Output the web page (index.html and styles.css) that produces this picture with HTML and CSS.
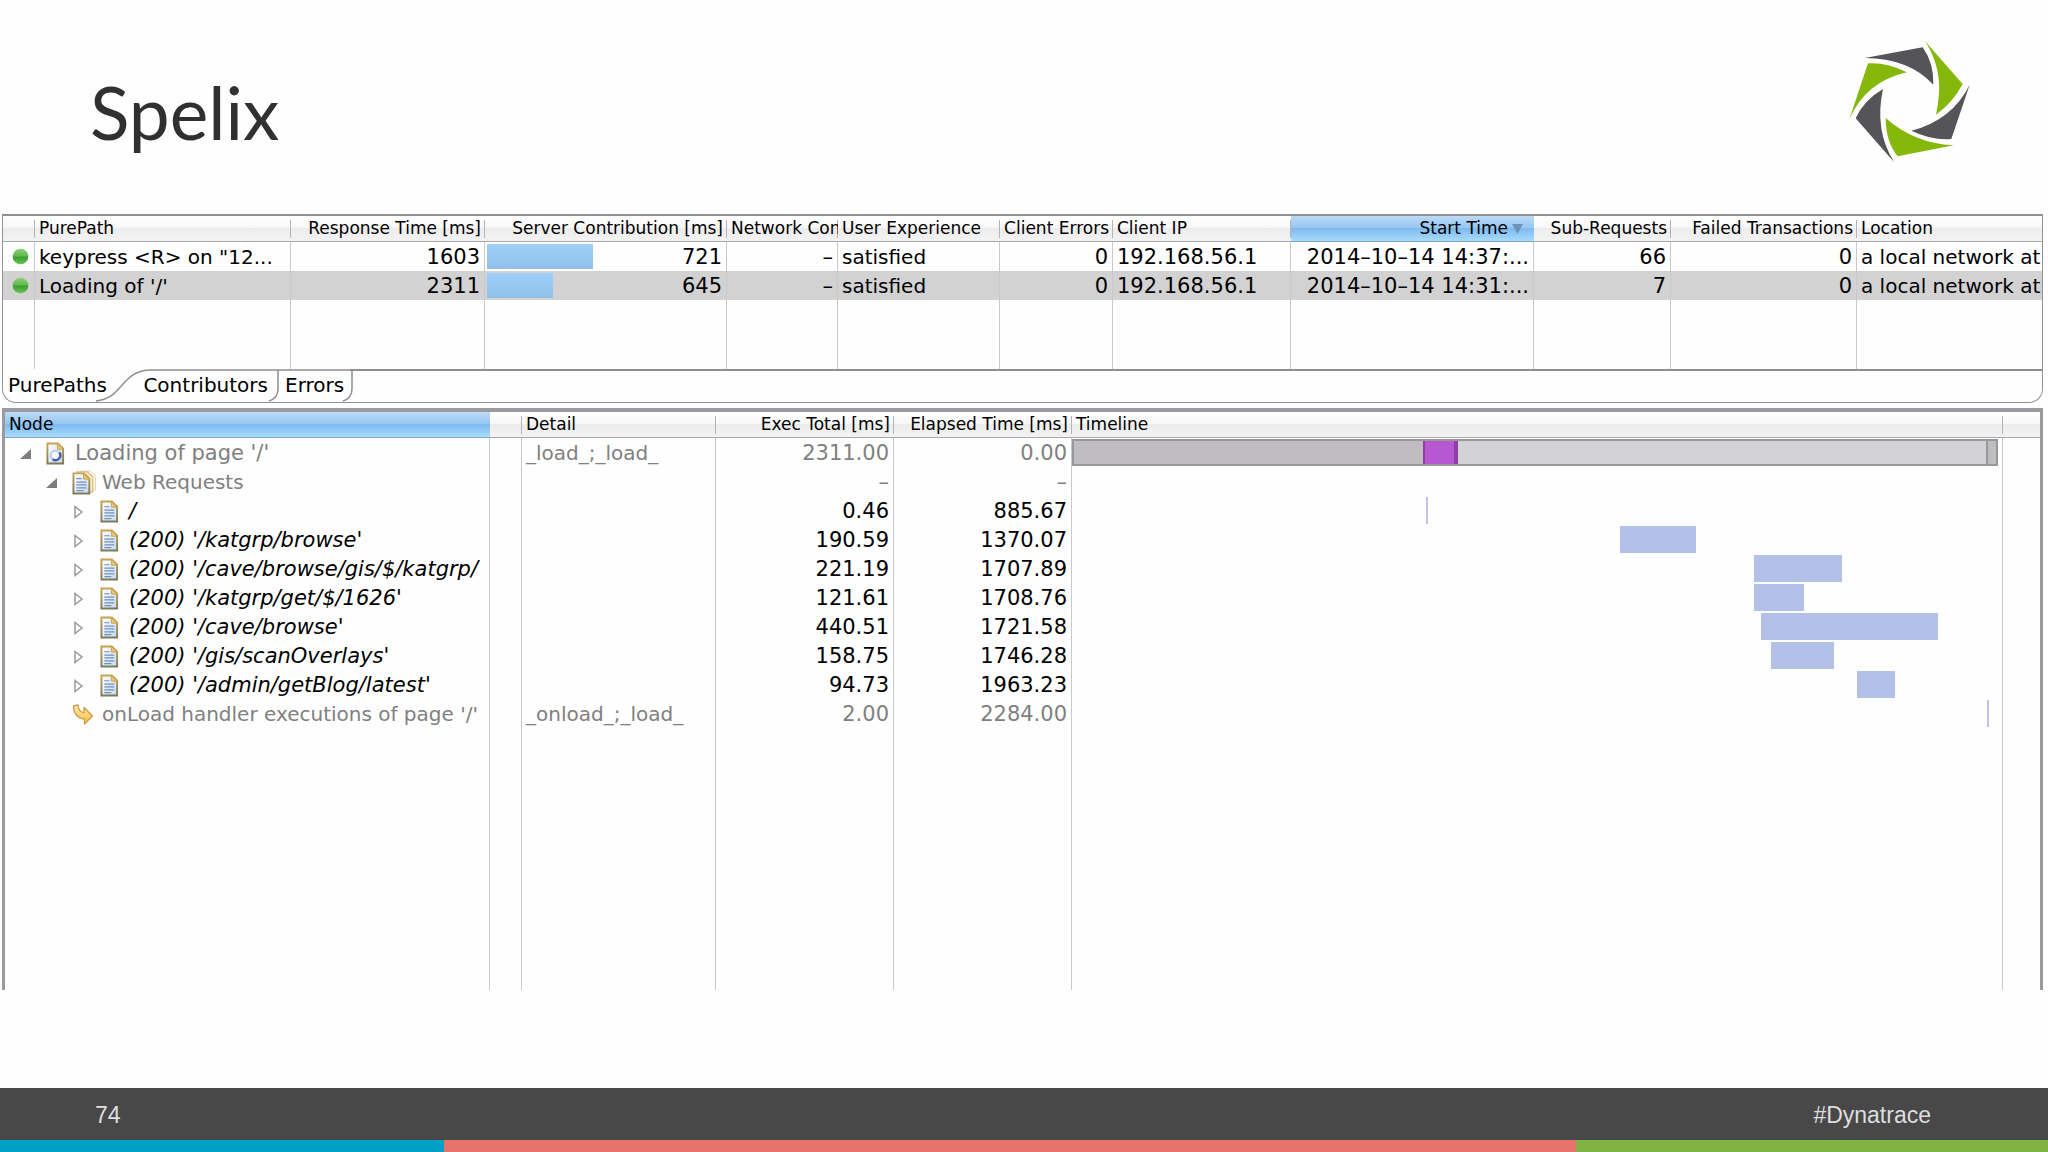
FILE: index.html
```html
<!DOCTYPE html>
<html lang="en">
<head>
<meta charset="utf-8">
<title>Spelix</title>
<link rel="stylesheet" href="styles.css">
</head>
<body>
<svg width="0" height="0" class="defs" aria-hidden="true">
  <defs>
    <linearGradient id="dotFill" x1="0" y1="0" x2="0" y2="1">
      <stop offset="0" stop-color="#8fd27c"/><stop offset=".45" stop-color="#63b84e"/>
      <stop offset=".55" stop-color="#3a9e2c"/><stop offset="1" stop-color="#6cc653"/>
    </linearGradient>
    <linearGradient id="edge" x1="0" y1="0" x2="0" y2="1">
      <stop offset="0" stop-color="#c9a250"/><stop offset="1" stop-color="#7d7a5c"/>
    </linearGradient>
    <linearGradient id="paper" x1="0" y1="0" x2="1" y2="1">
      <stop offset="0" stop-color="#ffffff"/><stop offset="1" stop-color="#c5daf3"/>
    </linearGradient>
    <linearGradient id="gold" x1="0" y1="0" x2="0" y2="1">
      <stop offset="0" stop-color="#fbf0b4"/><stop offset="1" stop-color="#f3bb3c"/>
    </linearGradient>
    <symbol id="dot" viewBox="0 0 18 18"><circle cx="9" cy="9" r="8.3" fill="url(#dotFill)"/></symbol>
    <symbol id="open" viewBox="0 0 12 12"><path d="M11 1V11H0Z" fill="#7d7d7d"/></symbol>
    <symbol id="closed" viewBox="0 0 12 16"><path d="M2 2.5L9 8L2 13.500Z" fill="#fff" stroke="#999" stroke-width="1.500"/></symbol>
    <symbol id="doc" viewBox="0 0 20 24">
      <path d="M1.500 1.500H12.500L18 7V22.500H1.500Z" fill="url(#paper)" stroke="url(#edge)" stroke-width="2"/>
      <path d="M12 1.500V7.500H18Z" fill="#e7c67c" stroke="#c9a250"/>
      <path d="M4.500 7H10M4.500 10.500H15M4.500 13.500H15M4.500 16.500H15M4.500 19.500H12" stroke="#6f90bd" stroke-width="1.300"/>
    </symbol>
    <symbol id="docs" viewBox="0 0 26 26">
      <path d="M9 1H19L24.500 6V21H9Z" fill="#fbf5e3" stroke="#e6d8ae"/>
      <path d="M5 2H16L21.500 7V23H5Z" fill="#f8edcf" stroke="#d6bf82" stroke-width="1.300"/>
      <path d="M1.500 3.500H12.500L18 9V24.500H1.500Z" fill="url(#paper)" stroke="url(#edge)" stroke-width="2"/>
      <path d="M12 3.500V9.500H18Z" fill="#e7c67c" stroke="#c9a250"/>
      <path d="M4.500 9H10M4.500 12.500H15M4.500 15.500H15M4.500 18.500H15M4.500 21.500H12" stroke="#6f90bd" stroke-width="1.300"/>
    </symbol>
    <symbol id="load" viewBox="0 0 20 24">
      <path d="M1.500 1.500H12.500L18 7V22.500H1.500Z" fill="url(#paper)" stroke="url(#edge)" stroke-width="2"/>
      <path d="M12 1.500V7.500H18Z" fill="#e7c67c" stroke="#c9a250"/>
      <circle cx="10" cy="14" r="5" fill="#f4f8ff" stroke="#c3cdea" stroke-width="2.500"/>
      <path d="M14 11A5 5 0 0 1 7 18" fill="none" stroke="#4a5fa8" stroke-width="2.500"/>
    </symbol>
    <symbol id="arrow" viewBox="0 0 22 22">
      <path d="M1.500 2L6 1C6.500 6 8 8.500 12 8.500V3.500L20.500 12L12.500 20V15C5.500 15 1.500 9 1.500 2Z" fill="url(#gold)" stroke="#cf9a44" stroke-width="1.300" stroke-linejoin="round"/>
    </symbol>
  </defs>
</svg>

<div class="slide">
  <header class="masthead">
    <h1>Spelix</h1>
    <svg class="logo" viewBox="90 60 363 369" role="img" aria-label="Dynatrace">
      <g fill="#545459">
        <path d="M137 114L311 82Q345 130 343 194Q270 115 137 114Z"/>
        <path d="M452 194L397 357Q340 362 277 332Q400 300 452 194Z"/>
        <path d="M225 426L110 295Q135 240 192 207Q165 330 225 426Z"/>
      </g>
      <g fill="#85b80b">
        <path d="M317 62L431 192Q400 250 351 284C368 205 365 135 317 62Z"/>
        <path d="M404 376L236 409Q200 365 200 294Q285 370 404 376Z"/>
        <path d="M91 298L147 130Q205 127 264 157Q140 185 91 298Z"/>
      </g>
    </svg>
  </header>

  <main>
    <section class="paths">
      <table>
        <colgroup>
          <col class="w-dot"><col class="w-path"><col class="w-resp"><col class="w-serv"><col class="w-net"><col class="w-ux">
          <col class="w-err"><col class="w-ip"><col class="w-start"><col class="w-sub"><col class="w-fail"><col>
        </colgroup>
        <thead>
          <tr>
            <th></th><th>PurePath</th><th class="num">Response Time [ms]</th><th class="num">Server Contribution [ms]</th>
            <th>Network Contribution [ms]</th><th>User Experience</th><th class="num">Client Errors</th><th>Client IP</th>
            <th class="num sorted">Start Time<svg class="sort" viewBox="0 0 12 10" aria-hidden="true"><path d="M0 0H11L5.500 10Z" fill="#6b94bb"/></svg></th>
            <th class="num">Sub-Requests</th><th class="num">Failed Transactions</th><th class="last">Location</th>
          </tr>
        </thead>
        <tbody>
          <tr>
            <td class="state"><svg class="dot"><use href="#dot"/></svg></td>
            <td>keypress &lt;R&gt; on "12...</td><td class="num">1603</td>
            <td class="num meter"><div class="track"><span class="fill" style="width:45%"></span><span>721</span></div></td>
            <td class="num">–</td><td>satisfied</td><td class="num">0</td><td class="address">192.168.56.1</td>
            <td class="num">2014–10–14 14:37:...</td><td class="num">66</td><td class="num">0</td><td class="last">a local network at</td>
          </tr>
          <tr class="selected">
            <td class="state"><svg class="dot"><use href="#dot"/></svg></td>
            <td>Loading of '/'</td><td class="num">2311</td>
            <td class="num meter"><div class="track"><span class="fill" style="width:28%"></span><span>645</span></div></td>
            <td class="num">–</td><td>satisfied</td><td class="num">0</td><td class="address">192.168.56.1</td>
            <td class="num">2014–10–14 14:31:...</td><td class="num">7</td><td class="num">0</td><td class="last">a local network at</td>
          </tr>
          <tr class="rest"><td></td><td></td><td></td><td></td><td></td><td></td><td></td><td></td><td></td><td></td><td></td><td class="last"></td></tr>
        </tbody>
      </table>
      <nav class="tabs">
        <svg class="tab-lines" viewBox="0 0 352 33" aria-hidden="true">
          <path d="M93 32C120 30 118 1 148 1H352M275 1V20Q275 29 266 32M349 1V20Q349 29 340 32" fill="none" stroke="#8f8f93" stroke-width="1.500"/>
        </svg>
        <button type="button" class="tab tab-first">PurePaths</button>
        <button type="button" class="tab tab-second">Contributors</button>
        <button type="button" class="tab">Errors</button>
        <span class="tab-fill"></span>
      </nav>
    </section>

    <section class="nodes">
      <table>
        <colgroup>
          <col class="w-node"><col class="w-gap"><col class="w-detail"><col class="w-exec"><col class="w-elapsed"><col><col class="w-tail">
        </colgroup>
        <thead>
          <tr>
            <th class="sorted">Node</th><th></th><th>Detail</th><th class="num">Exec Total [ms]</th><th class="num">Elapsed Time [ms]</th><th>Timeline</th><th class="last"></th>
          </tr>
        </thead>
        <tbody>
          <tr class="dim">
            <td><div class="node level-0"><svg class="twist"><use href="#open"/></svg><svg class="doc"><use href="#load"/></svg>Loading of page '/'</div></td>
            <td></td><td>_load_;_load_</td><td class="num">2311.00</td><td class="num">0.00</td>
            <td class="time"><div class="span total"><span class="before" style="width:37.900%"></span><span class="mark" style="width:3.700%"></span><span class="after"></span><span class="end"></span></div></td><td class="last"></td>
          </tr>
          <tr class="dim">
            <td><div class="node level-1"><svg class="twist"><use href="#open"/></svg><svg class="docs"><use href="#docs"/></svg>Web Requests</div></td>
            <td></td><td></td><td class="num">–</td><td class="num">–</td><td class="time"></td><td class="last"></td>
          </tr>
          <tr>
            <td><div class="node level-2"><svg class="fold"><use href="#closed"/></svg><svg class="doc"><use href="#doc"/></svg>/</div></td>
            <td></td><td></td><td class="num">0.46</td><td class="num">885.67</td>
            <td class="time"><div class="span tick" style="margin-left:38.200%"></div></td><td class="last"></td>
          </tr>
          <tr>
            <td><div class="node level-2"><svg class="fold"><use href="#closed"/></svg><svg class="doc"><use href="#doc"/></svg>(200) '/katgrp/browse'</div></td>
            <td></td><td></td><td class="num">190.59</td><td class="num">1370.07</td>
            <td class="time"><div class="span" style="margin-left:59.200%;width:8.200%"></div></td><td class="last"></td>
          </tr>
          <tr>
            <td><div class="node level-2"><svg class="fold"><use href="#closed"/></svg><svg class="doc"><use href="#doc"/></svg>(200) '/cave/browse/gis/$/katgrp/</div></td>
            <td></td><td></td><td class="num">221.19</td><td class="num">1707.89</td>
            <td class="time"><div class="span" style="margin-left:73.700%;width:9.500%"></div></td><td class="last"></td>
          </tr>
          <tr>
            <td><div class="node level-2"><svg class="fold"><use href="#closed"/></svg><svg class="doc"><use href="#doc"/></svg>(200) '/katgrp/get/$/1626'</div></td>
            <td></td><td></td><td class="num">121.61</td><td class="num">1708.76</td>
            <td class="time"><div class="span" style="margin-left:73.700%;width:5.300%"></div></td><td class="last"></td>
          </tr>
          <tr>
            <td><div class="node level-2"><svg class="fold"><use href="#closed"/></svg><svg class="doc"><use href="#doc"/></svg>(200) '/cave/browse'</div></td>
            <td></td><td></td><td class="num">440.51</td><td class="num">1721.58</td>
            <td class="time"><div class="span" style="margin-left:74.400%;width:19.100%"></div></td><td class="last"></td>
          </tr>
          <tr>
            <td><div class="node level-2"><svg class="fold"><use href="#closed"/></svg><svg class="doc"><use href="#doc"/></svg>(200) '/gis/scanOverlays'</div></td>
            <td></td><td></td><td class="num">158.75</td><td class="num">1746.28</td>
            <td class="time"><div class="span" style="margin-left:75.500%;width:6.800%"></div></td><td class="last"></td>
          </tr>
          <tr>
            <td><div class="node level-2"><svg class="fold"><use href="#closed"/></svg><svg class="doc"><use href="#doc"/></svg>(200) '/admin/getBlog/latest'</div></td>
            <td></td><td></td><td class="num">94.73</td><td class="num">1963.23</td>
            <td class="time"><div class="span" style="margin-left:84.800%;width:4.100%"></div></td><td class="last"></td>
          </tr>
          <tr class="dim">
            <td><div class="node leaf"><svg class="arrow"><use href="#arrow"/></svg>onLoad handler executions of page '/'</div></td>
            <td></td><td>_onload_;_load_</td><td class="num">2.00</td><td class="num">2284.00</td>
            <td class="time"><div class="span tick" style="margin-left:98.800%"></div></td><td class="last"></td>
          </tr>
          <tr class="rest"><td></td><td></td><td></td><td></td><td></td><td></td><td class="last"></td></tr>
        </tbody>
      </table>
    </section>
  </main>

  <footer>
    <div class="bar"><span>74</span><span>#Dynatrace</span></div>
    <div class="stripe"><span class="blue"></span><span class="coral"></span><span class="green"></span></div>
  </footer>
</div>
</body>
</html>
```

FILE: styles.css
```css
* { box-sizing: border-box; }

body {
  margin: 0;
  background: #fefefe;
  color: #000;
  font-family: "Lucida Grande", "DejaVu Sans", sans-serif;
  font-size: 20px;
}

.defs { position: absolute; }

.slide {
  display: flex;
  flex-direction: column;
  min-height: 100vh;
}

.masthead {
  display: flex;
  justify-content: space-between;
  align-items: flex-start;
  height: 214px;
  padding: 40px 78px 0 90px;
}

h1 {
  margin: 22px 0 0;
  color: #303030;
  font-family: Lato, sans-serif;
  font-size: 73px;
  font-weight: 400;
  line-height: 100px;
}

.logo { width: 121px; height: 123px; }

main {
  flex: 1;
  padding: 0 5px 0 2px;
}

table {
  width: 100%;
  table-layout: fixed;
  border-collapse: separate;
  border-spacing: 0;
}

th {
  height: 26px;
  padding: 0 4px 2px 4px;
  overflow: hidden;
  border-bottom: 1px solid #a8a8aa;
  background:
    linear-gradient(#b4b4b6, #b4b4b6) right center / 1px 18px no-repeat,
    linear-gradient(#fff, #f7f7f7 48%, #ececec 50%, #f3f3f3);
  font-size: 17px;
  font-weight: 400;
  line-height: 22px;
  text-align: left;
  white-space: nowrap;
}

th.sorted {
  border-bottom-color: #7fa9cc;
  background: linear-gradient(#bcdaf4, #97c7f3 46%, #7fbaf0 50%, #a9dcfb);
}

th.last { background: linear-gradient(#fff, #f7f7f7 48%, #ececec 50%, #f3f3f3); }

td {
  height: 29px;
  padding: 2px 4px 0 4px;
  overflow: hidden;
  border-right: 1px solid #c9c9cc;
  line-height: 27px;
  white-space: nowrap;
}

td.last { border-right: 0; }

.num { text-align: right; }
td.num, .address { font-size: 21px; }

.sort { width: 12px; height: 10px; margin: 0 6px 0 4px; }

.w-dot { width: 32px; }
.w-path { width: 256px; }
.w-resp { width: 194px; }
.w-serv { width: 242px; }
.w-net { width: 111px; }
.w-ux { width: 162px; }
.w-err { width: 113px; }
.w-ip { width: 178px; }
.w-start { width: 243px; }
.w-sub { width: 137px; }
.w-fail { width: 186px; }

.paths {
  border: 1px solid #929296;
  border-top-width: 2px;
  border-radius: 0 0 14px 14px;
}

.state { padding: 0 5px 0 9px; }
.dot { display: block; width: 17px; height: 17px; }

.selected td { background: #d3d2d3; }
.paths .rest td { height: 69px; }

.track {
  display: flex;
  justify-content: space-between;
  height: 25px;
  line-height: 27px;
}

.paths .meter { padding: 0 4px 0 2px; }
.fill { background: linear-gradient(#a0cffa, #90bfe8); }

.tabs {
  position: relative;
  display: flex;
  height: 33px;
}

.tab-lines {
  position: absolute;
  left: 0;
  top: 0;
  width: 352px;
  height: 33px;
  pointer-events: none;
}

.tab {
  padding: 0 6px 0 7px;
  border: 0;
  background: none;
  font: inherit;
  line-height: 31px;
}

.tab-first { width: 106px; padding: 0 0 0 5px; text-align: left; }
.tab-second { width: 169px; padding: 0 10px 0 0; text-align: right; }
.tab-fill { flex: 1; border-top: 2px solid #8f8f93; }

.nodes {
  margin-top: 5px;
  border: solid #9b9b9f;
  border-width: 4px 3px 0;
}

.w-node { width: 485px; }
.w-gap { width: 32px; }
.w-detail { width: 194px; }
.w-exec { width: 178px; }
.w-elapsed { width: 178px; }
.w-tail { width: 37px; }

.nodes .rest td { height: 262px; }
.dim { color: #808080; }

.node {
  display: flex;
  align-items: center;
  height: 27px;
  padding-left: 11px;
}

.level-0 { font-size: 21px; }
.level-1 { padding-left: 37px; }
.level-2 { padding-left: 64px; font-size: 21px; font-style: italic; }
.leaf { padding-left: 63px; }

.node svg { flex: none; }
.twist { width: 12px; height: 12px; margin-right: 14px; }
.fold { width: 12px; height: 16px; margin-right: 15px; }
.doc { width: 19px; height: 23px; margin-right: 10px; }
.docs { width: 25px; height: 25px; margin-right: 5px; }
.arrow { width: 22px; height: 22px; margin-right: 8px; }

.nodes td.time { padding: 0 4px 0 0; }

.span { height: 27px; background: #b3c1e8; }
.tick { width: 2px; background: #c3c0ee; }

.total {
  display: flex;
  border: 2px solid #98979a;
  background: #d3d2d4;
}

.before { background: #bfbdc0; }
.mark { background: #b757d2; border: solid #8d3fa5; border-width: 0 4px 0 2px; }
.after { flex: 1; }
.end { width: 10px; border-left: 2px solid #98979a; background: #bfbdc0; }

.bar {
  display: flex;
  justify-content: space-between;
  height: 52px;
  padding: 0 117px 0 95px;
  background: #484848;
  color: #dedede;
  font-family: "Liberation Sans", Arial, sans-serif;
  font-size: 23px;
  line-height: 54px;
}

.stripe { display: flex; height: 12px; }
.blue { width: 21.700%; background: #009fc4; }
.coral { flex: 1; background: #e8736c; }
.green { width: 23.050%; background: #7fb344; }
```
